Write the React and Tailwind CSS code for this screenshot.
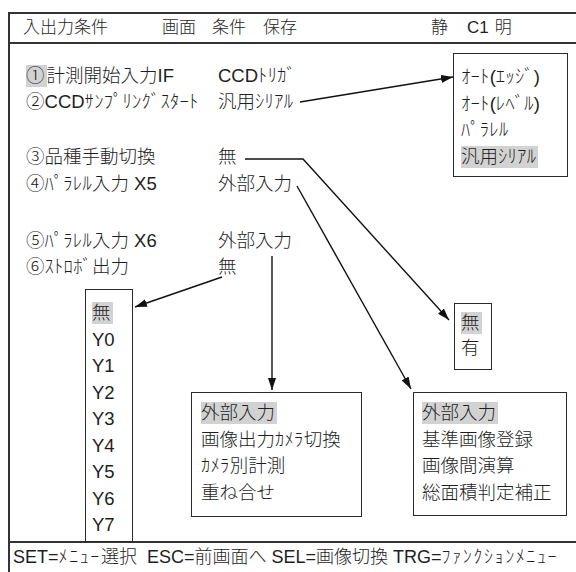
import React from "react";

const FONT = { fontFamily: '"Liberation Sans", "Noto Sans CJK JP", sans-serif' };

const RE = /([\uFF61-\uFF9F]+|[\u2460-\u24FF\u3000-\u30FF\u4E00-\u9FFF\uFF01-\uFF60]+)/;

function T({ children, kana = "tracking-[0.3px]" }) {
  const s = String(children);
  const parts = s.split(RE);
  return (
    <>
      {parts.map((p, i) => {
        if (!p) return null;
        if (/^[\uFF61-\uFF9F]+$/.test(p))
          return (
            <span key={i} className={kana + " font-light"}>{p}</span>
          );
        if (/^[\u2460-\u24FF\u3000-\u30FF\u4E00-\u9FFF\uFF01-\uFF60]+$/.test(p))
          return (
            <span key={i} className="font-light">{p}</span>
          );
        return <span key={i} className="font-normal">{p}</span>;
      })}
    </>
  );
}

function Hi({ children }) {
  return (
    <span className="inline-block bg-[#d2d2d2] leading-[22px] pr-[2px]">{children}</span>
  );
}

function Row({ label, value, className = "" }) {
  return (
    <div className={"grid grid-cols-[192px_1fr] h-[26px] items-center " + className}>
      <div className="whitespace-pre">{label}</div>
      <div className="whitespace-pre">{value}</div>
    </div>
  );
}

function Popup({ className, items, hi = 0, itemH = "h-[26.5px]" }) {
  return (
    <div className={"absolute bg-white border-[1.5px] border-[#2a2a2a] flex flex-col text-[18.5px] " + className}>
      {items.map((it, i) => (
        <div key={i} className={itemH + " flex items-center whitespace-nowrap"}>
          {i === hi ? <Hi><T>{it}</T></Hi> : <span><T>{it}</T></span>}
        </div>
      ))}
    </div>
  );
}

export default function App() {
  return (
    <div
      className="relative w-[576px] h-[572px] overflow-hidden bg-white text-[#1e1e1e] text-[17px]"
      style={FONT}
    >
      <div className="ml-[8px] mt-[12px] w-[600px] h-[600px] border-l-2 border-t-2 border-r-2 border-[#333] flex flex-col">
        {/* header */}
        <div className="h-[30px] border-b-2 border-[#333] flex items-center whitespace-nowrap pl-[13px]">
          <span><T>入出力条件</T></span>
          <span className="ml-[54px]"><T>画面</T></span>
          <span className="ml-[16px]"><T>条件</T></span>
          <span className="ml-[17px]"><T>保存</T></span>
          <span className="ml-[134px]"><T>静</T></span>
          <span className="ml-[19px]"><T>C1</T></span>
          <span className="ml-[6px]"><T>明</T></span>
        </div>
        {/* body */}
        <div className="h-[497px] pl-[16px] flex flex-col text-[18.5px]">
          <Row className="mt-[18px]" label={<><Hi><T>①</T></Hi><T>計測開始入力IF</T></>} value={<T>CCDﾄﾘｶﾞ</T>} />
          <Row label={<T>②CCDｻﾝﾌﾟﾘﾝｸﾞｽﾀｰﾄ</T>} value={<T>汎用ｼﾘｱﾙ</T>} />
          <Row className="mt-[29px]" label={<T>③品種手動切換</T>} value={<T>無</T>} />
          <Row className="mt-[1px]" label={<T>④ﾊﾟﾗﾚﾙ入力 X5</T>} value={<T>外部入力</T>} />
          <Row className="mt-[31px]" label={<T>⑤ﾊﾟﾗﾚﾙ入力 X6</T>} value={<T>外部入力</T>} />
          <Row label={<T>⑥ｽﾄﾛﾎﾞ出力</T>} value={<T>無</T>} />
        </div>
        {/* footer */}
        <div className="border-t-2 border-[#333] h-[31px] flex items-center pl-[3px] text-[18px]">
          <span className="whitespace-pre">
            <T kana="tracking-[1.6px]">{"SET=ﾒﾆｭｰ選択  ESC=前画面へ SEL=画像切換 TRG=ﾌｧﾝｸｼｮﾝﾒﾆｭｰ"}</T>
          </span>
        </div>
      </div>

      {/* popups */}
      <Popup
        className="left-[453px] top-[53px] w-[115px] h-[124px] pl-[7px] pt-[10px]"
        items={["ｵｰﾄ(ｴｯｼﾞ)", "ｵｰﾄ(ﾚﾍﾞﾙ)", "ﾊﾟﾗﾚﾙ", "汎用ｼﾘｱﾙ"]}
        hi={3}
      />
      <Popup
        className="left-[454px] top-[303px] w-[38px] h-[67px] pl-[6px] pt-[6px]"
        items={["無", "有"]}
        hi={0}
        itemH="h-[25px]"
      />
      <Popup
        className="left-[85px] top-[289px] w-[48px] h-[253px] pl-[6px] pt-[10px]"
        items={["無", "Y0", "Y1", "Y2", "Y3", "Y4", "Y5", "Y6", "Y7"]}
        hi={0}
      />
      <Popup
        className="left-[191px] top-[392px] w-[171px] h-[125px] pl-[9px] pt-[7px]"
        items={["外部入力", "画像出力ｶﾒﾗ切換", "ｶﾒﾗ別計測", "重ね合せ"]}
        hi={0}
      />
      <Popup
        className="left-[413px] top-[392px] w-[154px] h-[124px] pl-[8px] pt-[7px]"
        items={["外部入力", "基準画像登録", "画像間演算", "総面積判定補正"]}
        hi={0}
      />

      {/* arrows */}
      <svg className="absolute inset-0 pointer-events-none" width="576" height="572">
        <defs>
          <marker id="ah" viewBox="0 0 12 8" refX="12" refY="4" markerWidth="12" markerHeight="8" markerUnits="userSpaceOnUse" orient="auto">
            <path d="M0,0 L12,4 L0,8 z" fill="#111" />
          </marker>
        </defs>
        <g stroke="#111" strokeWidth="1.4" fill="none">
          <line x1="300" y1="102" x2="453" y2="77" markerEnd="url(#ah)" />
          <polyline points="245,159 303,159 449,320" markerEnd="url(#ah)" />
          <line x1="297" y1="186" x2="411" y2="389" markerEnd="url(#ah)" />
          <line x1="272" y1="256" x2="272" y2="390" markerEnd="url(#ah)" />
          <line x1="222" y1="277" x2="135" y2="307" markerEnd="url(#ah)" />
        </g>
      </svg>
    </div>
  );
}
